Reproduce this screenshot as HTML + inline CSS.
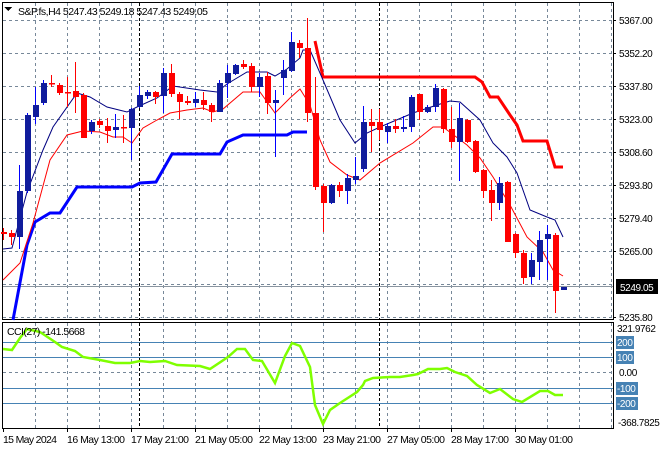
<!DOCTYPE html>
<html><head><meta charset="utf-8"><style>
html,body{margin:0;padding:0;background:#fff;width:660px;height:450px;overflow:hidden}
svg{display:block}
text{font-family:"Liberation Sans",sans-serif;font-size:10.5px;fill:#000}
.r{font-size:10px;letter-spacing:-0.4px}
</style></head><body>
<svg width="660" height="450" xmlns="http://www.w3.org/2000/svg" shape-rendering="crispEdges">
<g stroke="#778899" stroke-dasharray="3,3" stroke-width="1">
<path d="M3 20.5H613M3 53.5H613M3 86.5H613M3 119.5H613M3 152.5H613M3 185.5H613M3 218.5H613M3 251.5H613M3 284.5H613M3 317.5H613"/>
<path d="M35.5 3V319M67.5 3V319M99.5 3V319M131.5 3V319M163.5 3V319M195.5 3V319M227.5 3V319M259.5 3V319M291.5 3V319M323.5 3V319M355.5 3V319M387.5 3V319M419.5 3V319M451.5 3V319M483.5 3V319M515.5 3V319M547.5 3V319M579.5 3V319M611.5 3V319"/>
<path d="M35.5 323V428M67.5 323V428M99.5 323V428M131.5 323V428M163.5 323V428M195.5 323V428M227.5 323V428M259.5 323V428M291.5 323V428M323.5 323V428M355.5 323V428M387.5 323V428M419.5 323V428M451.5 323V428M483.5 323V428M515.5 323V428M547.5 323V428M579.5 323V428M611.5 323V428"/>
<path d="M3 372.5H613"/>
</g>
<g stroke="#000" stroke-dasharray="3,2">
<path d="M139.5 3V319M379.5 3V319M139.5 323V428M379.5 323V428"/>
</g>
<path d="M3 286.5H613" stroke="#8a95a0"/>
<g stroke="#4682b4"><path d="M3 342.5H613M3 357.5H613M3 388.5H613M3 403.5H613"/></g>
<g fill="none" stroke="#000">
<rect x="2.5" y="2.5" width="611" height="317"/>
<rect x="2.5" y="322.5" width="611" height="106"/>
</g>
<g stroke="#000"><path d="M613 20.5h3M613 53.5h3M613 86.5h3M613 119.5h3M613 152.5h3M613 185.5h3M613 218.5h3M613 251.5h3M613 317.5h3M3.5 429v3M67.5 429v3M131.5 429v3M195.5 429v3M259.5 429v3M323.5 429v3M387.5 429v3M451.5 429v3M515.5 429v3"/></g>

<g shape-rendering="auto" fill="none">
<polyline stroke="#0000ff" stroke-width="3" points="13,320 27,245 35,222 50,213 60,213 77,187 132,187 140,183 156,182 172,154 220,154 227,142 243,135 287,135 293,132 307,132"/>
<polyline stroke="#ff0000" stroke-width="3" points="315,41 323,77 475,77 482,82 490,97 498,97 510,115 517,125 523,141 547,141 555,167 563,167"/>
<polyline stroke="#000080" stroke-width="1" points="3,249 12,248 27,192 43,150 53,127 77,93 90,97 107,107 127,112 137,107 157,98 173,86 200,90 217,92 227,84 247,72 267,72 275,76 287,69 300,58 303,50 310,50 323,80 340,120 355,143 367,133 380,127 413,113 437,105 450,101 460,102 480,120 493,143 507,157 517,173 530,210 547,217 555,220 563,237"/>
<polyline stroke="#ff0000" stroke-width="1" points="3,280 20,263 33,223 50,160 67,135 83,131 100,132 113,137 123,137 132,143 143,128 157,120 170,113 187,110 203,108 213,112 223,109 243,92 260,92 275,113 290,98 300,89 310,105 320,140 330,162 347,175 360,180 380,163 413,143 433,127 443,127 467,145 480,158 493,177 510,205 527,237 543,252 553,270 563,276"/>
<polyline stroke="#7fff00" stroke-width="2.5" points="3,349 12,350 20,338 27,329 40,332 55,342 62,347 75,351 83,357 100,360 115,363 130,363 140,361 150,362 165,361 177,365 200,366 210,369 228,357 237,349 245,349 253,360 262,361 275,383 285,356 292,343 300,346 310,367 315,405 323,424 330,410 340,403 357,392 363,385 365,381 373,378 390,377 400,377 413,375 418,374 428,369 440,369 447,368 455,372 467,376 477,385 490,393 500,389 513,399 522,402 540,391 548,391 555,395 563,395"/>
</g>

<g stroke-width="1">
<g stroke="#ff0000" fill="#ff0000">
<path d="M3.5 228V240M11.5 230V245M51.5 75V87M59.5 83V95M67.5 77V107M75.5 62V113M83.5 93V138M99.5 119V128M107.5 118V143M123.5 115V143M155.5 91V104M171.5 64V97M179.5 92V119M187.5 96V105M203.5 92V110M211.5 103V122M243.5 60V69M251.5 63V92M267.5 72V114M299.5 40V58M307.5 18V122M315.5 77V190M323.5 184V232M339.5 182V197M371.5 109V152M379.5 109V140M395.5 119V133M419.5 94V120M443.5 88V133M451.5 107V148M467.5 119V143M475.5 140V173M483.5 169V198M491.5 180V221M507.5 181V242M515.5 233V258M523.5 250V284M555.5 233V313"/>
<rect x="1" y="232" width="6" height="2" stroke="none"/><rect x="9" y="233" width="6" height="4" stroke="none"/>
<rect x="49" y="83" width="6" height="1.5" stroke="none"/><rect x="57" y="85" width="6" height="8" stroke="none"/>
<rect x="65" y="92" width="6" height="1.5" stroke="none"/><rect x="73" y="91" width="6" height="6" stroke="none"/>
<rect x="81" y="95" width="6" height="43" stroke="none"/><rect x="97" y="121" width="6" height="4" stroke="none"/>
<rect x="105" y="126" width="6" height="5" stroke="none"/><rect x="121" y="127" width="6" height="1.5" stroke="none"/>
<rect x="153" y="92" width="6" height="5" stroke="none"/><rect x="169" y="73" width="6" height="21" stroke="none"/>
<rect x="177" y="94" width="6" height="8" stroke="none"/><rect x="185" y="101" width="6" height="2" stroke="none"/>
<rect x="201" y="100" width="6" height="5" stroke="none"/><rect x="209" y="105" width="6" height="7" stroke="none"/>
<rect x="241" y="64" width="6" height="3" stroke="none"/><rect x="249" y="66" width="6" height="21" stroke="none"/>
<rect x="265" y="76" width="6" height="27" stroke="none"/><rect x="297" y="43" width="6" height="5" stroke="none"/>
<rect x="305" y="48" width="6" height="65" stroke="none"/><rect x="313" y="113" width="6" height="74" stroke="none"/>
<rect x="321" y="186" width="6" height="17" stroke="none"/><rect x="337" y="185" width="6" height="6" stroke="none"/>
<rect x="369" y="122" width="6" height="4" stroke="none"/><rect x="377" y="122" width="6" height="8" stroke="none"/>
<rect x="393" y="126" width="6" height="3" stroke="none"/><rect x="417" y="94" width="6" height="18" stroke="none"/>
<rect x="441" y="89" width="6" height="40" stroke="none"/><rect x="449" y="129" width="6" height="13" stroke="none"/>
<rect x="465" y="120" width="6" height="22" stroke="none"/><rect x="473" y="141" width="6" height="31" stroke="none"/>
<rect x="481" y="170" width="6" height="21" stroke="none"/><rect x="489" y="190" width="6" height="13" stroke="none"/>
<rect x="505" y="182" width="6" height="60" stroke="none"/><rect x="513" y="234" width="6" height="19" stroke="none"/>
<rect x="521" y="253" width="6" height="25" stroke="none"/><rect x="553" y="235" width="6" height="56" stroke="none"/>
</g>
<g stroke="#0000ff" fill="#101c9c">
<path d="M19.5 165V249M27.5 113V193M35.5 87V124M43.5 80V105M91.5 120V134M115.5 114V138M131.5 108V160M139.5 86V108M147.5 90V99M163.5 68V113M195.5 92V107M219.5 80V112M227.5 65V98M235.5 64V75M259.5 73V97M275.5 90V157M283.5 60V95M291.5 32V72M331.5 184V204M347.5 174V204M355.5 157V184M363.5 106V172M387.5 123V143M403.5 116V132M411.5 95V132M427.5 105V113M435.5 84V112M459.5 103V181M499.5 177V210M531.5 253V284M539.5 231V280M547.5 225V280"/>
<rect x="17" y="191" width="6" height="46" stroke="none"/><rect x="25" y="115" width="6" height="76" stroke="none"/>
<rect x="33" y="105" width="6" height="12" stroke="none"/><rect x="41" y="83" width="6" height="20" stroke="none"/>
<rect x="89" y="122" width="6" height="9" stroke="none"/><rect x="113" y="127" width="6" height="3" stroke="none"/>
<rect x="129" y="109" width="6" height="19" stroke="none"/><rect x="137" y="95" width="6" height="12" stroke="none"/>
<rect x="145" y="92" width="6" height="4" stroke="none"/><rect x="161" y="73" width="6" height="23" stroke="none"/>
<rect x="193" y="99" width="6" height="4" stroke="none"/><rect x="217" y="83" width="6" height="29" stroke="none"/>
<rect x="225" y="73" width="6" height="10" stroke="none"/><rect x="233" y="65" width="6" height="9" stroke="none"/>
<rect x="257" y="77" width="6" height="10" stroke="none"/><rect x="273" y="100" width="6" height="3" stroke="none"/>
<rect x="281" y="70" width="6" height="8" stroke="none"/><rect x="289" y="42" width="6" height="29" stroke="none"/>
<rect x="329" y="185" width="6" height="18" stroke="none"/><rect x="345" y="178" width="6" height="13" stroke="none"/>
<rect x="353" y="176" width="6" height="4" stroke="none"/><rect x="361" y="122" width="6" height="47" stroke="none"/>
<rect x="385" y="126" width="6" height="6" stroke="none"/><rect x="401" y="127" width="6" height="2" stroke="none"/>
<rect x="409" y="97" width="6" height="30" stroke="none"/><rect x="425" y="107" width="6" height="5" stroke="none"/>
<rect x="433" y="88" width="6" height="19" stroke="none"/><rect x="457" y="118" width="6" height="24" stroke="none"/>
<rect x="497" y="183" width="6" height="20" stroke="none"/><rect x="529" y="260" width="6" height="17" stroke="none"/>
<rect x="537" y="240" width="6" height="22" stroke="none"/><rect x="545" y="234" width="6" height="5" stroke="none"/>
<rect x="561" y="287" width="6" height="3" stroke="none"/>
</g>
</g>

<path d="M4 7h8l-4 4z" fill="#000"/>
<text x="18" y="15" textLength="190">S&amp;P.fs,H4  5247.43 5249.18 5247.43 5249.05</text>
<text x="7" y="335" textLength="78">CCI(27) -141.5668</text>

<g class="r">
<text class="r" x="619" y="24">5367.00</text>
<text class="r" x="619" y="57">5352.20</text>
<text class="r" x="619" y="90">5337.80</text>
<text class="r" x="619" y="123">5323.00</text>
<text class="r" x="619" y="156">5308.60</text>
<text class="r" x="619" y="189">5293.80</text>
<text class="r" x="619" y="222">5279.40</text>
<text class="r" x="619" y="255">5265.00</text>
<text class="r" x="619" y="321">5235.80</text>
<rect x="616" y="279" width="42" height="15" fill="#000"/>
<text class="r" x="620" y="291" style="fill:#fff">5249.05</text>
<text class="r" x="617" y="332">321.9762</text>
<rect x="616" y="336" width="18" height="13" fill="#4682b4"/><text class="r" x="617" y="346" style="fill:#fff">200</text>
<rect x="616" y="351" width="18" height="13" fill="#4682b4"/><text class="r" x="617" y="361" style="fill:#fff">100</text>
<text class="r" x="619" y="376">0.00</text>
<rect x="616" y="382" width="22" height="13" fill="#4682b4"/><text class="r" x="617" y="392" style="fill:#fff">-100</text>
<rect x="616" y="397" width="22" height="13" fill="#4682b4"/><text class="r" x="617" y="407" style="fill:#fff">-200</text>
<text class="r" x="618" y="426">-368.7825</text>
</g>
<g>
<text x="3" y="443" textLength="54">15 May 2024</text>
<text x="67" y="443" textLength="58">16 May 13:00</text>
<text x="131" y="443" textLength="58">17 May 21:00</text>
<text x="195" y="443" textLength="58">21 May 05:00</text>
<text x="259" y="443" textLength="58">22 May 13:00</text>
<text x="323" y="443" textLength="58">23 May 21:00</text>
<text x="387" y="443" textLength="58">27 May 05:00</text>
<text x="451" y="443" textLength="58">28 May 17:00</text>
<text x="515" y="443" textLength="58">30 May 01:00</text>
</g>
</svg>
</body></html>
